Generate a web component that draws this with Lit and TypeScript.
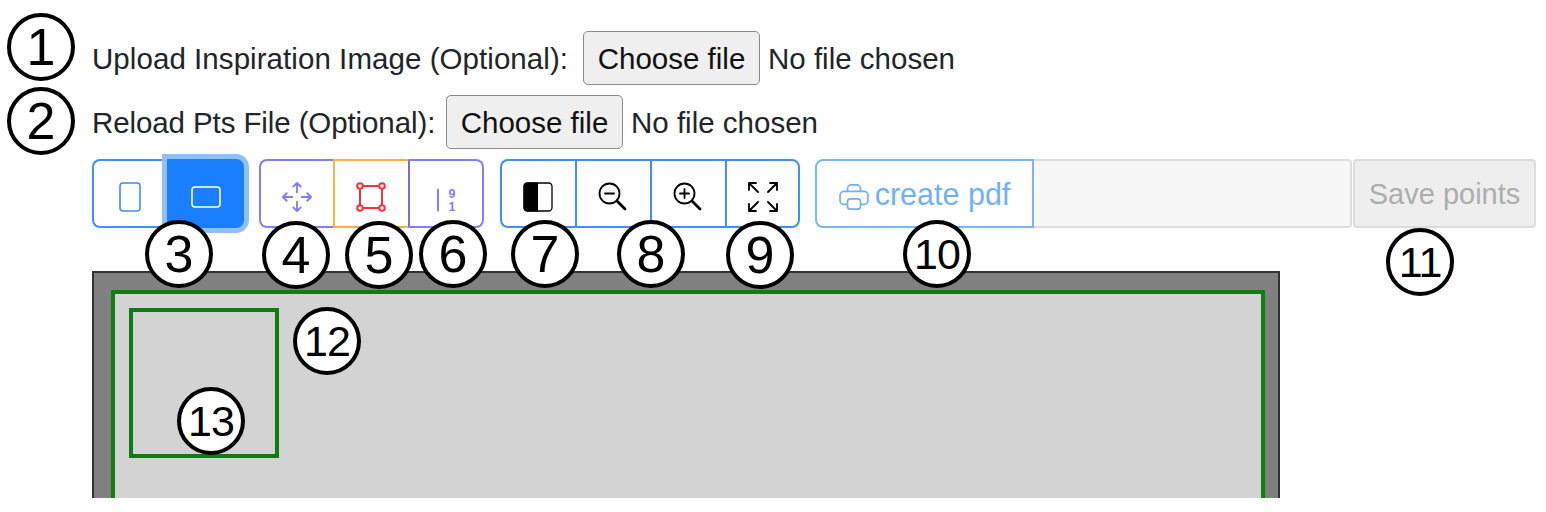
import { LitElement, html, css, svg } from "lit";
import { customElement } from "lit/decorators.js";

const MARKS: [string, number, number, number][] = [
  ["1", 7, 13, 0], ["2", 7, 87, 0], ["3", 145, 220, 0], ["4", 262, 221, 0],
  ["5", 345, 221, 0], ["6", 419, 220, 0], ["7", 511, 220, 0], ["8", 617, 220, 0],
  ["9", 726, 221, 0], ["10", 903, 220, 1], ["11", 1386, 228, 1], ["12", 293, 307, 1], ["13", 177, 387, 1],
];

const icon = (w: number, h: number, vb: string, body: unknown) =>
  html`<svg width=${w} height=${h} viewBox=${vb} fill="none" stroke="currentColor" stroke-linecap="round" stroke-linejoin="round">${body}</svg>`;

@customElement("app-root")
export class AppRoot extends LitElement {
  static styles = css`
    :host { display: block; position: relative; height: 512px; overflow: hidden; background: #fff; font-family: "Liberation Sans", Arial, sans-serif; color: #212529; }
    .page { display: flex; flex-direction: column; padding: 31px 0 0 92px; }
    .row { display: flex; align-items: center; height: 54px; margin-bottom: 10px; font-size: 29.5px; }
    .row label, .row span { padding-top: 2px; white-space: nowrap; }
    .l1 { width: 491px; letter-spacing: 0.06px; }
    .l2 { width: 354px; letter-spacing: -0.1px; }
    .file { width: 177px; height: 54px; box-sizing: border-box; border: 1.5px solid #8a8a8a; border-radius: 5px; background: #efefef; font: inherit; color: #111; padding: 2px 0 0; margin-right: 8px; }
    .toolbar { display: flex; height: 69px; margin-bottom: 43px; }
    .group { display: flex; }
    .g1 { margin-right: 15px; }
    .g2 { margin-right: 16px; }
    .g3 { margin-right: 15px; }
    .tb { width: 75px; height: 69px; box-sizing: border-box; margin: 0; padding: 6px 2px 0 0; display: flex; align-items: center; justify-content: center; background: #fff; border: 2px solid #3d8ffd; border-right-width: 0; color: #3d8ffd; position: relative; }
    .group .tb:first-child { border-radius: 8px 0 0 8px; }
    .group .tb:last-child { border-right-width: 2px; padding-right: 0; border-radius: 0 8px 8px 0; }
    .g1 .on { width: 77px; background: #1a7fff; border-color: #1a7fff; color: #fff; box-shadow: 0 0 0 5px #8fbfff; z-index: 1; }
    .violet { width: 74px; padding-right: 0; border-color: #7f80f5; color: #7f80f5; }
    .orange { border-color: #fdae46; color: #f5333f; }
    .purple { width: 76px; border-color: #7f80f5; border-left-color: #7a6fd0; color: #7f80f5; }
    .mono { color: #000; }
    .pdf { width: 219px; height: 69px; box-sizing: border-box; display: flex; align-items: center; justify-content: center; gap: 6px; padding: 2px 0 0; background: #fff; border: 2px solid #7ab5ff; border-radius: 8px 0 0 8px; color: #6fb0ff; font: inherit; font-size: 30.5px; }
    .pdf svg { margin-top: 4px; }
    .name { width: 318px; height: 69px; box-sizing: border-box; background: #f7f7f7; border: 2px solid #dedede; border-left: 0; border-radius: 0 4px 4px 0; }
    .save { width: 183px; height: 69px; box-sizing: border-box; margin-left: 1px; padding: 2px 0 0; background: #eee; border: 2px solid #dcdcdc; border-radius: 4px; color: #adadad; font: inherit; font-size: 29px; }
    .stage { width: 1188px; height: 227px; box-sizing: border-box; overflow: hidden; background: #808080; border: 2px solid #333; border-bottom: 0; padding: 17px 13px 0 17px; }
    .frame { height: 300px; box-sizing: border-box; background: #d3d3d3; border: 4px solid #0f7d0f; padding: 14px; }
    .square { width: 150px; height: 150px; box-sizing: border-box; border: 4px solid #0f7d0f; }
    .mark { position: absolute; width: 68px; height: 68px; box-sizing: border-box; display: flex; align-items: center; justify-content: center; background: #fff; border: 4px solid #000; border-radius: 50%; color: #000; font-size: 52px; line-height: 1; z-index: 2; }
    .mark.two { font-size: 43px; letter-spacing: -1px; }
  `;

  render() {
    return html`
      <div class="page">
        <div class="row"><label class="l1">Upload Inspiration Image (Optional):</label><button class="file">Choose file</button><span>No file chosen</span></div>
        <div class="row"><label class="l2">Reload Pts File (Optional):</label><button class="file">Choose file</button><span>No file chosen</span></div>
        <div class="toolbar">
          <div class="group g1">
            <button class="tb">${icon(22, 30, "0 0 22 30", svg`<rect x="1" y="1" width="20" height="28" rx="3" stroke-width="1.600"/>`)}</button>
            <button class="tb on">${icon(30, 22, "0 0 30 22", svg`<rect x="1" y="1" width="28" height="20" rx="3" stroke-width="1.600"/>`)}</button>
          </div>
          <div class="group g2">
            <button class="tb violet">${icon(30, 30, "0 0 16 16", svg`<path stroke-width="1" d="M8 .5V5.500M8 10.500V15.500M.5 8H5.500M10.500 8H15.500M6 2.500 8 .5l2 2M6 13.500l2 2 2-2M2.500 6l-2 2 2 2M13.500 6l2 2-2 2"/>`)}</button>
            <button class="tb orange">${icon(30, 30, "0 0 30 30", svg`<path stroke-width="2" d="M5 4H25M26 5V25M25 26H5M4 25V5"/><g stroke-width="2" fill="#fff"><circle cx="4" cy="4" r="2.800"/><circle cx="26" cy="4" r="2.800"/><circle cx="4" cy="26" r="2.800"/><circle cx="26" cy="26" r="2.800"/></g>`)}</button>
            <button class="tb purple">${icon(30, 38, "0 0 30 38", svg`<path stroke-width="2" d="M7 11.500V32.500"/><text x="21" y="19.500" text-anchor="middle" font-size="12.500" font-weight="700" font-family="Liberation Sans" fill="currentColor" stroke="none">9</text><text x="21" y="33" text-anchor="middle" font-size="12.500" font-weight="700" font-family="Liberation Sans" fill="currentColor" stroke="none">1</text>`)}</button>
          </div>
          <div class="group g3">
            <button class="tb mono">${icon(30, 30, "0 0 30 30", svg`<rect x="1" y="1" width="28" height="28" rx="3.500" stroke-width="1.300"/><path fill="currentColor" stroke="none" d="M15 .5H4.500A4 4 0 0 0 .5 4.500V25.500A4 4 0 0 0 4.500 29.500H15Z"/>`)}</button>
            <button class="tb mono">${icon(30, 30, "0 0 30 30", svg`<circle cx="11.500" cy="11.500" r="10" stroke-width="1.800"/><path stroke-width="1.800" d="M7 11.500H16"/><path stroke-width="2.800" d="M19.500 19.500 27 27"/>`)}</button>
            <button class="tb mono">${icon(30, 30, "0 0 30 30", svg`<circle cx="11.500" cy="11.500" r="10" stroke-width="1.800"/><path stroke-width="1.800" d="M7 11.500H16M11.500 7V16"/><path stroke-width="2.800" d="M19.500 19.500 27 27"/>`)}</button>
            <button class="tb mono">${icon(30, 30, "0 0 30 30", svg`<path stroke-width="1.800" d="M1 8V1H8M1 1 10 10M22 1H29V8M29 1 20 10M1 22V29H8M1 29 10 20M29 22V29H22M29 29 20 20"/>`)}</button>
          </div>
          <button class="pdf">${icon(30, 26, "0 0 16 14", svg`<path stroke-width=".9" d="M4.500 4V2.500a2 2 0 0 1 2-2h3a2 2 0 0 1 2 2V4M4 11H2.500A2 2 0 0 1 .5 9V6A2 2 0 0 1 2.500 4h11a2 2 0 0 1 2 2v3a2 2 0 0 1-2 2H12"/><rect x="4.500" y="8" width="7" height="5.500" rx="1.500" stroke-width=".9"/>`)}create pdf</button>
          <div class="name"></div>
          <button class="save">Save points</button>
        </div>
        <div class="stage"><div class="frame"><div class="square"></div></div></div>
      </div>
      ${MARKS.map(([n, x, y, two]) => html`<div class="mark ${two ? "two" : ""}" style="left:${x}px;top:${y}px">${n}</div>`)}
    `;
  }
}
